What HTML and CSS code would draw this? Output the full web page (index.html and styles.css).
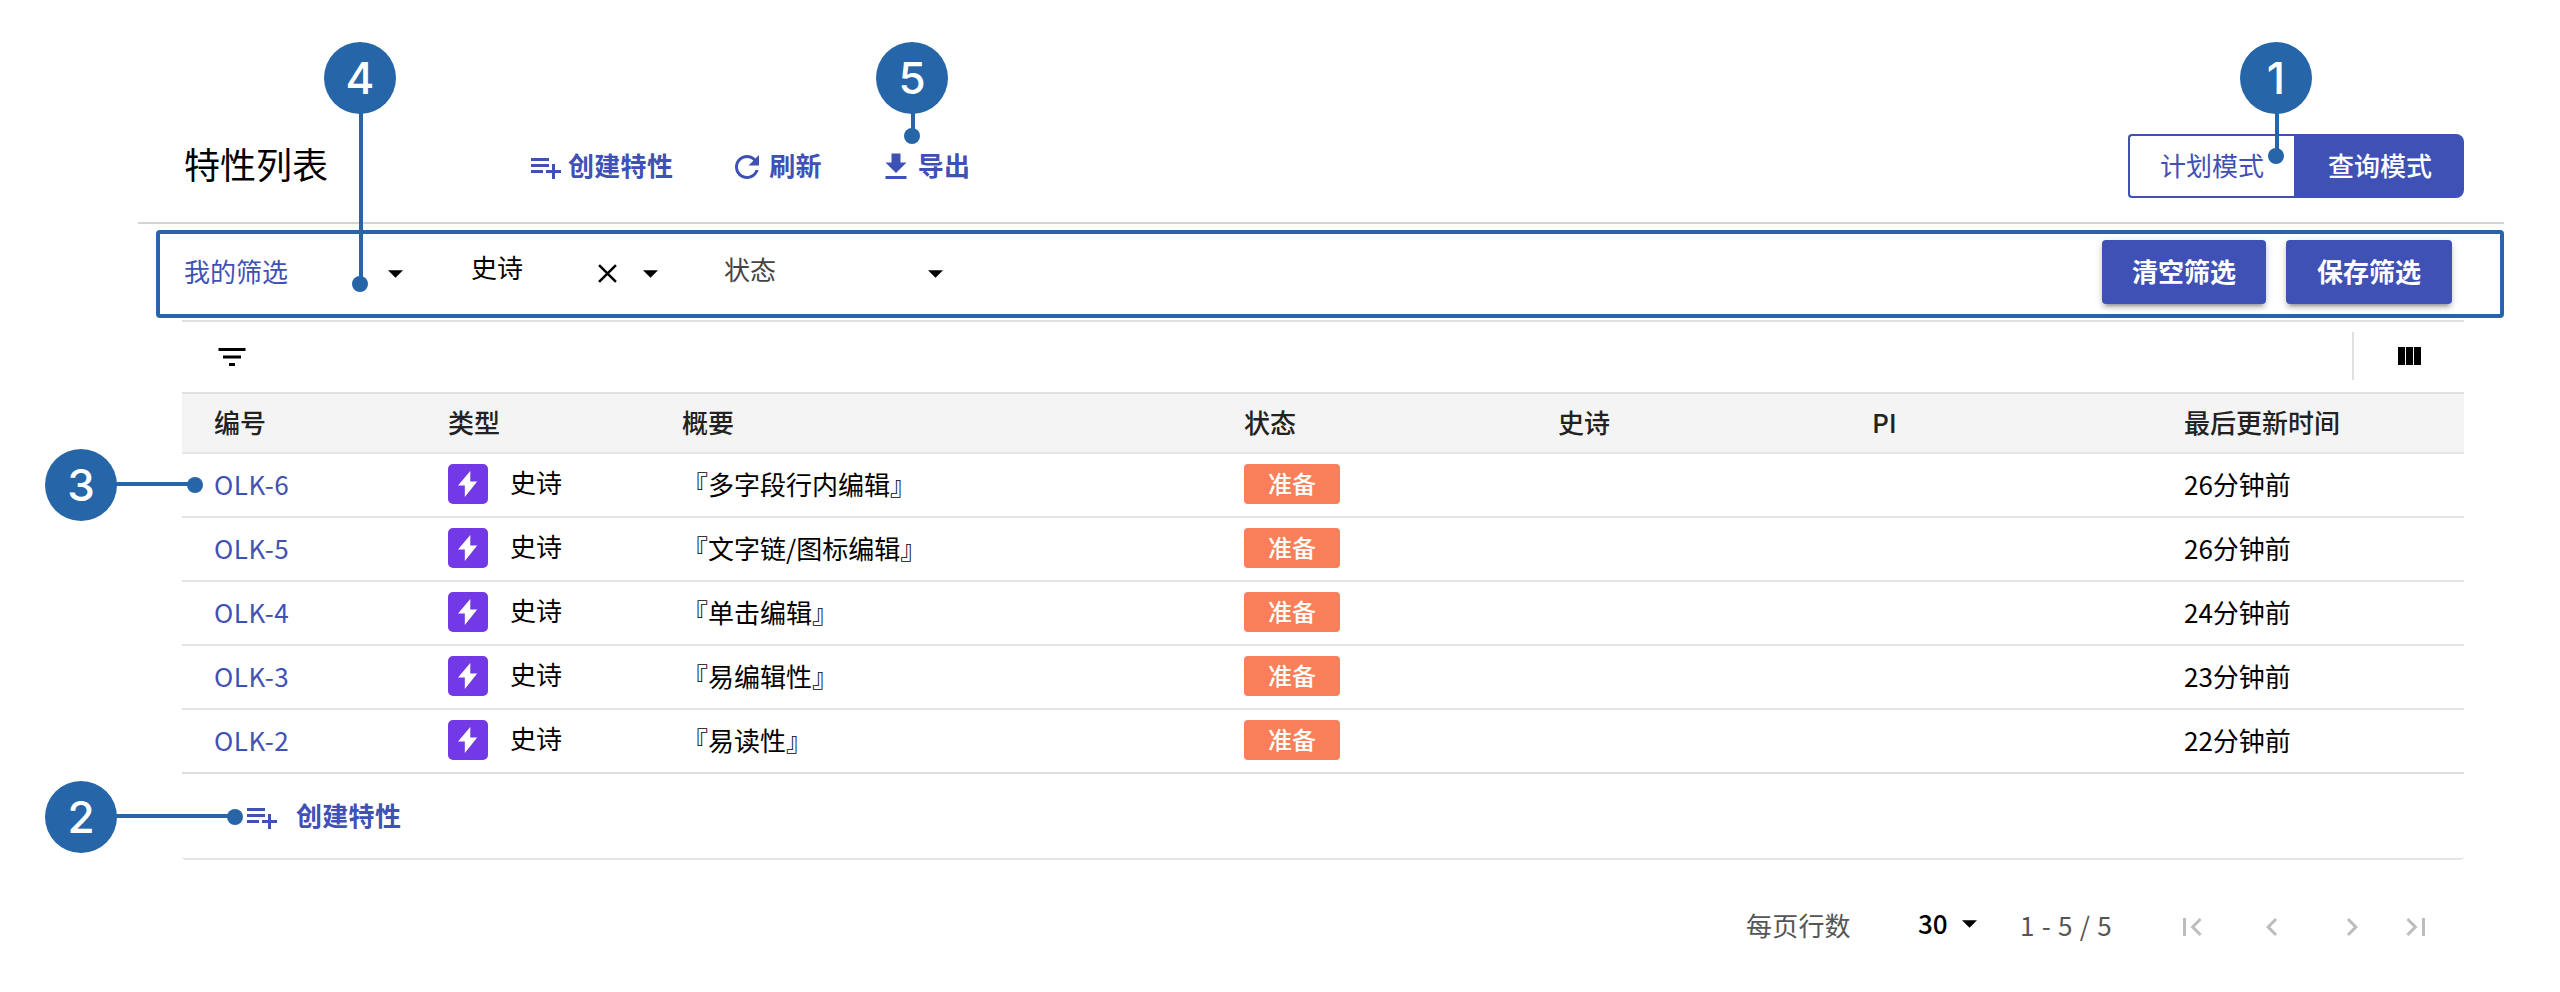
FILE: index.html
```html
<!DOCTYPE html>
<html lang="zh-CN">
<head>
<meta charset="utf-8">
<title>特性列表</title>
<link rel="stylesheet" href="styles.css">
</head>
<body>
<svg class="defs" width="0" height="0">
  <symbol id="playlist-add" viewBox="0 0 24 24"><path d="M14 10H2v2h12v-2zm0-4H2v2h12V6zm4 8v-4h-2v4h-4v2h4v4h2v-4h4v-2h-4zM2 16h8v-2H2v2z"/></symbol>
  <symbol id="refresh" viewBox="0 0 24 24"><path d="M17.65 6.35C16.2 4.9 14.21 4 12 4c-4.42 0-7.99 3.58-7.99 8s3.57 8 7.99 8c3.73 0 6.84-2.55 7.73-6h-2.08c-.82 2.33-3.04 4-5.65 4-3.31 0-6-2.69-6-6s2.69-6 6-6c1.66 0 3.14.69 4.22 1.78L13 11h7V4l-2.35 2.35z"/></symbol>
  <symbol id="download" viewBox="0 0 24 24"><path d="M19 9h-4V3H9v6H5l7 7 7-7zM5 18v2h14v-2H5z"/></symbol>
  <symbol id="filter" viewBox="0 0 24 24"><path d="M10 18h4v-2h-4v2zM3 6v2h18V6H3zm3 7h12v-2H6v2z"/></symbol>
  <symbol id="caret" viewBox="0 0 14 7"><path d="M0 0h14l-7 7z"/></symbol>
  <symbol id="close" viewBox="0 0 18 18"><path d="M1 1l16 16M17 1L1 17" fill="none" stroke="#000" stroke-width="2.4"/></symbol>
  <symbol id="bolt" viewBox="0 0 20 26"><path d="M12.3 0L0 14.6h6.8V26L19.2 10.4h-6.9z"/></symbol>
  <symbol id="first" viewBox="0 0 24 24"><path d="M18.41 16.59L13.82 12l4.59-4.59L17 6l-6 6 6 6zM6 6h2v12H6z"/></symbol>
  <symbol id="prev" viewBox="0 0 24 24"><path d="M15.41 7.41L14 6l-6 6 6 6 1.41-1.41L10.83 12z"/></symbol>
  <symbol id="next" viewBox="0 0 24 24"><path d="M10 6L8.59 7.41 13.17 12l-4.58 4.59L10 18l6-6z"/></symbol>
  <symbol id="last" viewBox="0 0 24 24"><path d="M5.59 7.41L10.18 12l-4.59 4.59L7 18l6-6-6-6zM16 6h2v12h-2z"/></symbol>
</svg>

<header class="header">
  <h1 class="title">特性列表</h1>
  <div class="actions">
    <div class="action"><svg class="icon"><use href="#playlist-add"/></svg><span>创建特性</span></div>
    <div class="action"><svg class="icon"><use href="#refresh"/></svg><span>刷新</span></div>
    <div class="action"><svg class="icon"><use href="#download"/></svg><span>导出</span></div>
  </div>
  <div class="modes">
    <div class="mode">计划模式</div>
    <div class="mode mode-active">查询模式</div>
  </div>
</header>

<section class="filters">
  <div class="select select-mine"><span>我的筛选</span><svg class="caret"><use href="#caret"/></svg></div>
  <div class="select select-epic"><span>史诗</span><svg class="close"><use href="#close"/></svg><svg class="caret"><use href="#caret"/></svg></div>
  <div class="select select-status"><span>状态</span><svg class="caret"><use href="#caret"/></svg></div>
  <div class="buttons">
    <div class="button">清空筛选</div>
    <div class="button button-save">保存筛选</div>
  </div>
</section>

<main class="panel">
  <div class="toolbar">
    <svg class="icon"><use href="#filter"/></svg>
    <div class="columns"><i></i><i></i><i></i></div>
  </div>
  <div class="row head"><div>编号</div><div>类型</div><div>概要</div><div>状态</div><div>史诗</div><div>PI</div><div>最后更新时间</div></div>
  <div class="row"><div class="key">OLK-6</div><div class="type"><span class="epic"><svg><use href="#bolt"/></svg></span><span class="type-name">史诗</span></div><div class="text">『多字段行内编辑』</div><div><span class="badge">准备</span></div><div></div><div></div><div class="text">26分钟前</div></div>
  <div class="row"><div class="key">OLK-5</div><div class="type"><span class="epic"><svg><use href="#bolt"/></svg></span><span class="type-name">史诗</span></div><div class="text">『文字链/图标编辑』</div><div><span class="badge">准备</span></div><div></div><div></div><div class="text">26分钟前</div></div>
  <div class="row"><div class="key">OLK-4</div><div class="type"><span class="epic"><svg><use href="#bolt"/></svg></span><span class="type-name">史诗</span></div><div class="text">『单击编辑』</div><div><span class="badge">准备</span></div><div></div><div></div><div class="text">24分钟前</div></div>
  <div class="row"><div class="key">OLK-3</div><div class="type"><span class="epic"><svg><use href="#bolt"/></svg></span><span class="type-name">史诗</span></div><div class="text">『易编辑性』</div><div><span class="badge">准备</span></div><div></div><div></div><div class="text">23分钟前</div></div>
  <div class="row row-last"><div class="key">OLK-2</div><div class="type"><span class="epic"><svg><use href="#bolt"/></svg></span><span class="type-name">史诗</span></div><div class="text">『易读性』</div><div><span class="badge">准备</span></div><div></div><div></div><div class="text">22分钟前</div></div>
  <div class="create"><svg class="icon"><use href="#playlist-add"/></svg><span>创建特性</span></div>
</main>

<footer class="pager">
  <span class="pager-label">每页行数</span>
  <span class="pager-size">30<svg class="caret"><use href="#caret"/></svg></span>
  <span class="pager-range">1 - 5 / 5</span>
  <div class="pager-nav">
    <svg class="icon"><use href="#first"/></svg>
    <svg class="icon"><use href="#prev"/></svg>
    <svg class="icon"><use href="#next"/></svg>
    <svg class="icon"><use href="#last"/></svg>
  </div>
</footer>

<!-- Numbered callouts laid over the page -->
<div class="callout down c1"><b>1</b></div>
<div class="callout right c2"><b>2</b></div>
<div class="callout right c3"><b>3</b></div>
<div class="callout down c4"><b>4</b></div>
<div class="callout down c5"><b>5</b></div>
</body>
</html>
```
FILE: styles.css
```css
* { box-sizing: border-box; }
body {
  margin: 0;
  width: 2560px;
  height: 992px;
  padding: 110px 56px 0 138px;
  position: relative;
  overflow: hidden;
  background: #fff;
  color: #000;
  font: 26px/36px "Noto Sans CJK SC", sans-serif;
}
svg { display: block; fill: currentColor; flex: none; }
.defs { position: absolute; }
.icon { width: 36px; height: 36px; }
.caret { width: 15px; height: 8px; }

.header {
  height: 114px;
  padding: 0 40px 0 46px;
  border-bottom: 2px solid #d4d4d4;
  display: flex;
  align-items: center;
}
.title { margin: 0; padding-bottom: 6px; width: 344px; font-size: 36px; line-height: 48px; font-weight: 400; }
.actions { display: flex; gap: 56px; flex: 1; padding-top: 2px; color: #3f51b5; font-weight: 700; letter-spacing: .3px; }
.action { display: flex; gap: 4px; align-items: center; }
.action span { padding-bottom: 4px; }
.modes { display: flex; }
.mode {
  width: 166px;
  height: 64px;
  border: 2px solid #3f51b5;
  border-right: 0;
  border-radius: 4px 0 0 4px;
  color: #3f51b5;
  display: flex;
  align-items: center;
  padding: 0 0 2px 30px;
}
.mode-active {
  width: 170px;
  padding-left: 34px;
  border: 0;
  border-radius: 0 8px 8px 0;
  background: #3f51b5;
  color: #fff;
  font-weight: 500;
}

.filters {
  margin: 6px 0 0 18px;
  height: 88px;
  border: 4px solid #2565a8;
  border-radius: 4px;
  padding: 0 48px 4px 24px;
  display: flex;
  align-items: center;
}
.select { display: flex; align-items: center; }
.select span { flex: 1; padding-bottom: 2px; }
.select .caret { margin-top: 3px; }
.select-mine { width: 219px; margin-right: 68px; }
.select-mine span { color: #3f51b5; }
.select-epic { width: 187px; margin-right: 66px; }
.select-epic span { padding-bottom: 10px; }
.select-status { width: 219px; }
.select-status span { color: #444; padding-bottom: 6px; }
.close { width: 19px; height: 19px; margin: 2px 26px 0 0; }
.buttons { margin-left: auto; display: flex; gap: 20px; }
.button {
  width: 164px;
  height: 64px;
  padding-bottom: 2px;
  border-radius: 4px;
  background: #3f51b5;
  color: #fff;
  font-weight: 700;
  display: flex;
  align-items: center;
  justify-content: center;
  box-shadow: 0 6px 2px -4px rgba(0,0,0,.2), 0 4px 4px rgba(0,0,0,.14), 0 2px 10px rgba(0,0,0,.12);
}
.button-save { width: 166px; }

.panel { margin: 2px 40px 0 44px; border-top: 2px solid #e0e0e0; }
.toolbar {
  height: 72px;
  padding: 0 0 2px 32px;
  border-bottom: 2px solid #e0e0e0;
  display: flex;
  align-items: center;
  justify-content: space-between;
}
.toolbar .icon { margin-top: 2px; }
.columns {
  width: 112px;
  height: 48px;
  border-left: 2px solid #e0e0e0;
  padding-left: 44px;
  display: flex;
  align-items: center;
  gap: 1px;
}
.columns i { width: 7px; height: 18px; background: #000; }
.row {
  height: 64px;
  padding: 0 0 2px 32px;
  border-bottom: 2px solid #e6e6e6;
  display: grid;
  grid-template-columns: 234px 234px 562px 314px 314px 312px 1fr;
  align-items: center;
}
.row-last { border-bottom-color: #dedede; }
.head { height: 60px; padding-bottom: 3px; background: #f4f4f4; color: #222; font-weight: 500; }
.key { color: #3f51b5; letter-spacing: .5px; padding-bottom: 1px; }
.text { padding-bottom: 1px; }
.type { display: flex; align-items: center; gap: 22px; }
.type-name { padding-bottom: 4px; }
.epic {
  width: 40px;
  height: 40px;
  border-radius: 5px;
  background: #7339e6;
  color: #fff;
  display: grid;
  place-items: center;
}
.epic svg { width: 20px; height: 26px; }
.badge {
  display: flex;
  align-items: center;
  justify-content: center;
  width: 96px;
  height: 40px;
  padding-bottom: 3px;
  border-radius: 4px;
  background: #f87f5a;
  color: #fff;
  font-size: 24px;
  font-weight: 500;
}
.create {
  height: 86px;
  padding-left: 62px;
  border-bottom: 2px solid #e6e6e6;
  border-radius: 0 0 4px 4px;
  display: flex;
  align-items: center;
  gap: 16px;
  color: #3f51b5;
  font-weight: 700;
  letter-spacing: .3px;
}
.create .icon { margin-top: 2px; }
.create span { padding-bottom: 2px; }

.pager {
  height: 132px;
  padding-right: 70px;
  display: flex;
  align-items: center;
  justify-content: flex-end;
  color: #555;
}
.pager-label { width: 172px; padding-bottom: 2px; letter-spacing: .2px; }
.pager-size { width: 102px; padding-bottom: 6px; display: flex; align-items: center; gap: 14px; color: #000; font-weight: 500; }
.pager-size .caret { margin-top: 2px; }
.pager-range { width: 154px; padding-bottom: 2px; word-spacing: 1.5px; }
.pager-nav { display: flex; padding-top: 2px; color: #bdbdbd; gap: 44px; }
.pager-nav .icon:last-child { margin-left: -16px; }

.callout { position: absolute; width: 72px; height: 72px; color: #fff; }
.callout b {
  position: relative;
  display: block;
  height: 72px;
  border-radius: 50%;
  background: #2565a8;
  font: 500 44px/72px Inter, sans-serif;
  text-align: center;
}
.callout::before, .callout::after { content: ""; position: absolute; background: #2565a8; }
.callout::after { width: 16px; height: 16px; border-radius: 50%; }
.down::before { left: 35px; top: 70px; width: 4px; height: calc(var(--reach) - 70px); }
.down::after { left: 28px; top: calc(var(--reach) - 8px); }
.right::before { top: 33px; left: 70px; height: 4px; width: calc(var(--reach) - 70px); }
.right::after { top: 28px; left: calc(var(--reach) - 8px); }
.c1 { left: 2240px; top: 42px; --reach: 114px; }
.c2 { left: 45px; top: 781px; --reach: 190px; }
.c3 { left: 45px; top: 449px; --reach: 150px; }
.c4 { left: 324px; top: 42px; --reach: 242px; }
.c5 { left: 876px; top: 42px; --reach: 94px; }
```
